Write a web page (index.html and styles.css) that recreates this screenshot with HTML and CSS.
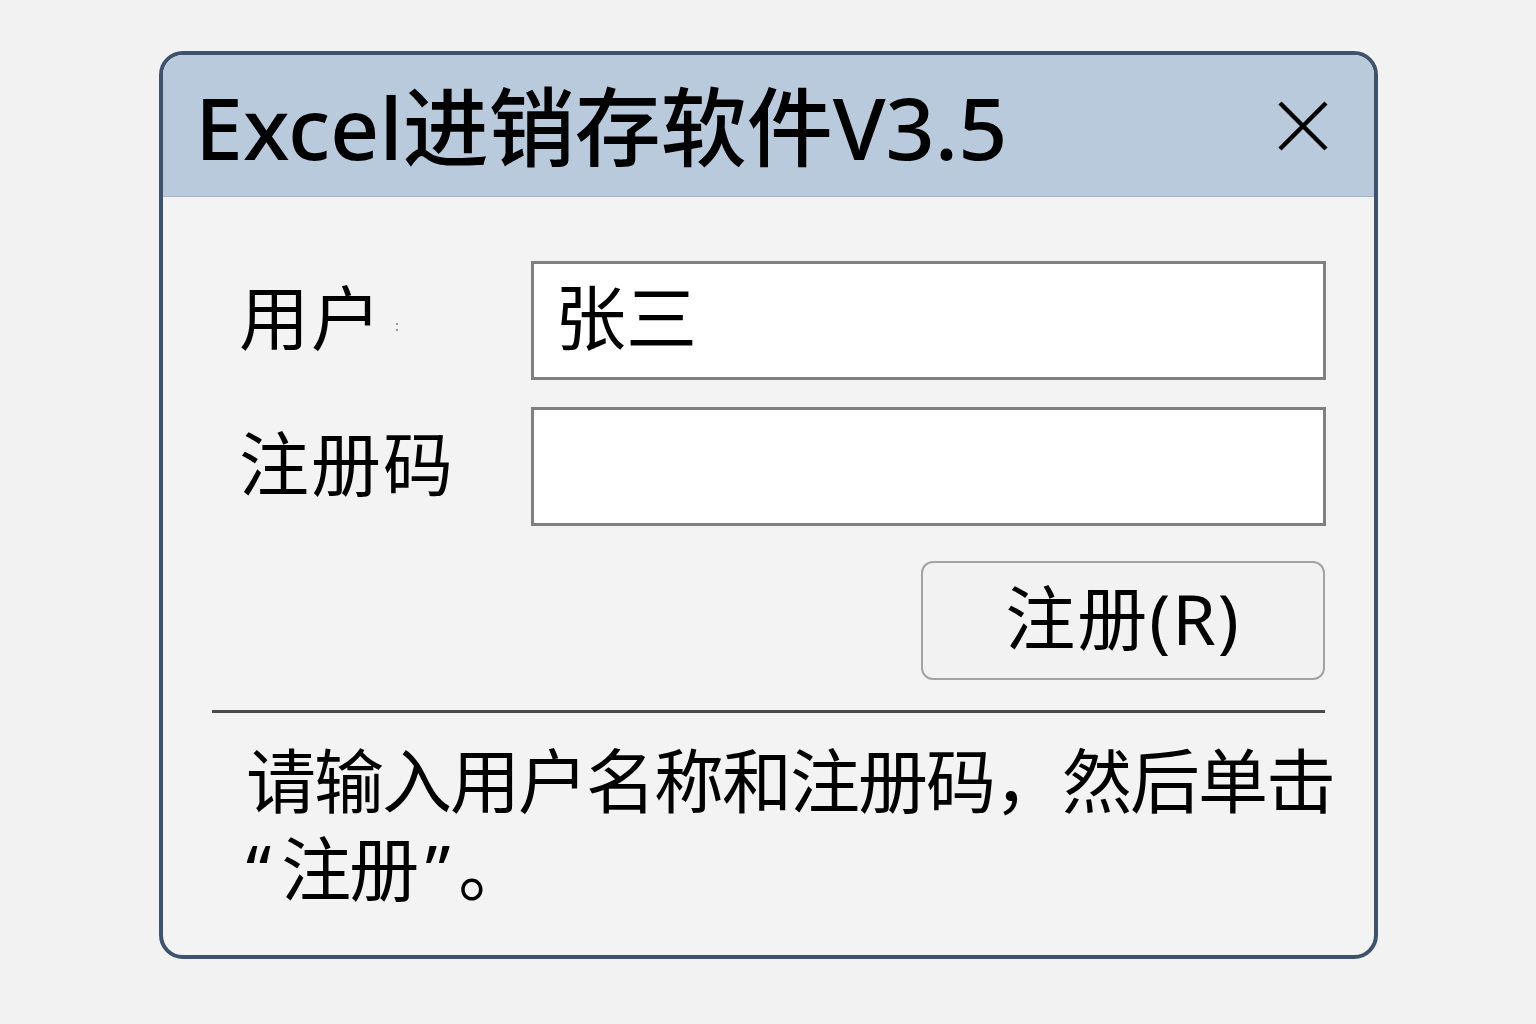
FILE: index.html
```html
<!DOCTYPE html>
<html lang="zh-CN">

<head>
    <meta charset="UTF-8">
    <title>Excel进销存软件V3.5</title>
    <link rel="stylesheet" href="styles.css">
</head>

<body>
    <div class="dialog">
        <div class="titlebar">
            <h1>Excel进销存软件V3.5</h1>
            <span class="close">
                <svg width="50" height="50" viewBox="0 0 50 50">
                    <path d="M2 2 L48 48 M48 2 L2 48" stroke="#000" stroke-width="4.5" fill="none"/>
                </svg>
            </span>
        </div>

        <div class="content">
            <div class="form">
                <label>用户<span class="colon">:</span></label>
                <div class="input">张三</div>
                <label>注册码</label>
                <div class="input"></div>
            </div>

            <div class="actions">
                <button>注册(R)</button>
            </div>

            <div class="line"></div>

            <p class="hint">请输入用户名称和注册码，然后单击<span class="q-open">“</span>注册<span class="q-close">”</span>。</p>
        </div>
    </div>
</body>

</html>
```

FILE: styles.css
```css
* {
    padding: 0;
    margin: 0;
    box-sizing: border-box;
}

body {
    background: #f2f2f2;
    font-family: "Noto Sans", "Noto Sans CJK SC", sans-serif;
    color: #000;
}

.dialog {
    width: 1219px;
    height: 908px;
    margin: 51px 0 0 159px;
    border: 4px solid #3f526c;
    border-radius: 24px;
    background: #f3f3f3;
    overflow: hidden;
}

.titlebar {
    height: 142px;
    background: #b9cadd;
    border-bottom: 1px solid #a6b6c9;
    display: flex;
    align-items: center;
    justify-content: space-between;
    padding: 0 46px 0 32px;
}

.titlebar h1 {
    font-size: 86px;
    font-weight: 500;
    line-height: 1;
    margin-top: 2px;
}

.close {
    display: block;
    width: 50px;
    height: 50px;
}

.content {
    padding: 64px 47px 0 76px;
}

.form {
    display: grid;
    grid-template-columns: 292px 795px;
    row-gap: 27px;
    align-items: center;
}

.form label {
    font-size: 70px;
    line-height: 1;
    letter-spacing: 2px;
    margin-top: -6px;
}

.colon {
    font-size: 14px;
    color: #777;
    margin-left: 12px;
    vertical-align: middle;
}

.input {
    height: 119px;
    background: #fff;
    border: 3px solid #808080;
    font-size: 71px;
    line-height: 106px;
    padding-left: 21px;
}

.actions {
    display: flex;
    justify-content: flex-end;
    margin-top: 35px;
    padding-right: 2px;
}

button {
    width: 404px;
    height: 119px;
    background: #f2f2f2;
    border: 2px solid #a3a3a3;
    border-radius: 12px;
    font-family: "Noto Sans", "Noto Sans CJK SC", sans-serif;
    font-size: 70px;
    line-height: 1;
    letter-spacing: 2px;
    padding-bottom: 6px;
}

.line {
    height: 3px;
    background: #4a4a4a;
    margin: 30px 0 0 -27px;
    width: 1113px;
}

.hint {
    width: 1100px;
    font-size: 70px;
    line-height: 88px;
    letter-spacing: -2px;
    margin-top: 24px;
    padding-left: 7px;
}

.q-open {
    margin-right: 12px;
}

.q-close {
    margin: 0 10px 0 8px;
}
```
